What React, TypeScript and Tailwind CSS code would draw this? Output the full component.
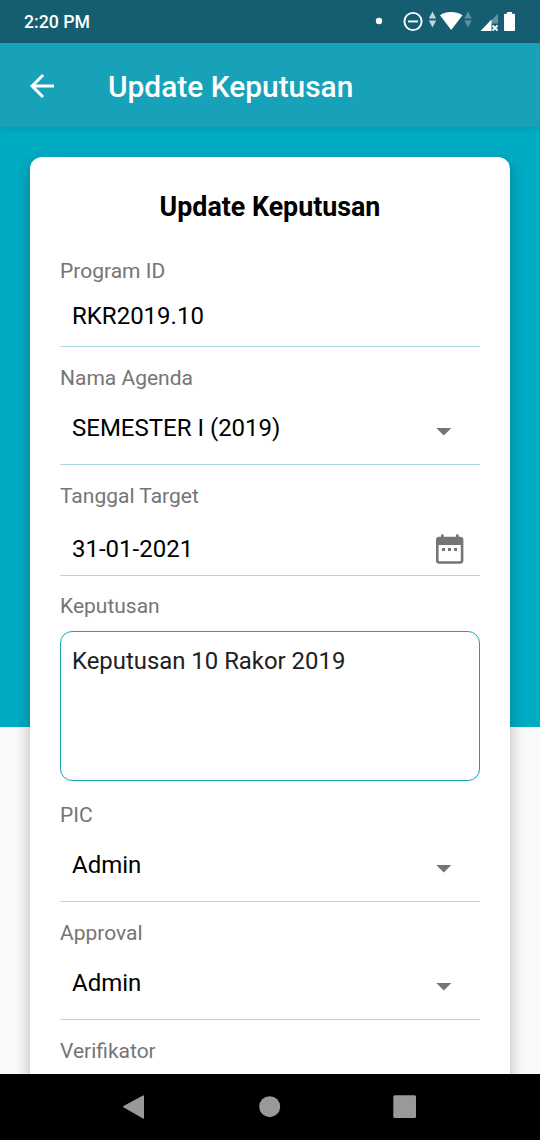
import type { ReactNode } from "react";

function StatusBar() {
  return (
    <div className="flex h-[43px] shrink-0 items-center bg-[#155e72] pr-6 pl-6 text-white">
      <span className="pt-px text-[17.7px] leading-6 font-medium">2:20 PM</span>
      <svg className="ml-auto h-[43px] w-[150px] shrink-0" viewBox="366 0 150 43" fill="#fff">
        <circle cx="379" cy="21" r="3.2" />
        <circle cx="413" cy="21.5" r="8.6" fill="none" stroke="#fff" strokeWidth="1.9" />
        <rect x="408" y="20.5" width="10" height="1.9" />
        <path d="M432.500 11.500l3.700 7h-7.400zM432.500 27.500l3.700-7h-7.400z" fill="#c3d5da" />
        <path d="M440 15.200C446 10.800 456 10.800 462.500 15.200L451.200 30z" />
        <path d="M468 11.500l3.700 7h-7.400zM468 27.500l3.700-7h-7.400z" fill="#5f91a0" />
        <path d="M491 20.700L498 13.500V23.500H491z" fill="#5f91a0" />
        <path d="M480.500 31L491.500 19.500V31z" />
        <path d="M492.500 25.500l5 5m0-5l-5 5" stroke="#fff" strokeWidth="1.900" />
        <path d="M507 12h5v1.700h2a1 1 0 0 1 1 1V30a1 1 0 0 1-1 1h-9a1 1 0 0 1-1-1V14.700a1 1 0 0 1 1-1h2z" />
      </svg>
    </div>
  );
}

function AppBar() {
  return (
    <header className="relative flex h-[84px] shrink-0 items-center bg-[#17a2ba] pl-6 text-white shadow-[0_1px_8px_rgba(0,0,0,0.12)]">
      <svg className="mt-px h-9 w-9" viewBox="0 0 24 24" fill="currentColor">
        <path d="M20 11H7.830l5.590-5.590L12 4l-8 8 8 8 1.410-1.410L7.830 13H20v-2z" />
      </svg>
      <h1 className="ml-12 pt-1 text-[29.9px] leading-9 font-medium">Update Keputusan</h1>
    </header>
  );
}

function Label({ children }: { children: ReactNode }) {
  return (
    <div className="h-[45px] pt-[17px] text-[21px] leading-7 text-[#757575]">{children}</div>
  );
}

function Caret() {
  return (
    <svg className="mt-[8px] mr-[28px] ml-auto h-2 w-4" viewBox="0 0 16 8" fill="#757575">
      <path d="M0.300 0h15L7.800 7.500z" />
    </svg>
  );
}

function SelectField({ label, value }: { label: string; value: string }) {
  return (
    <div>
      <Label>{label}</Label>
      <div className="flex h-[73px] items-center border-b border-[#add8e6] pl-3 text-[24px] text-black">
        <span>{value}</span>
        <Caret />
      </div>
    </div>
  );
}

function NavBar() {
  return (
    <nav className="relative flex h-[66px] shrink-0 items-center justify-center bg-black">
      <svg className="h-[66px] w-[540px]" viewBox="0 0 540 66" fill="#999">
        <path
          d="M123.800 32.700L143.300 22V44z"
          stroke="#999"
          strokeWidth="1.400"
          strokeLinejoin="round"
        />
        <circle cx="269.700" cy="32.700" r="10.500" />
        <rect x="393.300" y="21.300" width="22.700" height="22.700" rx="1.500" />
      </svg>
    </nav>
  );
}

export default function App() {
  return (
    <div className="flex h-[1140px] w-[540px] flex-col overflow-hidden font-['Roboto',sans-serif]">
      <StatusBar />
      <AppBar />
      <main className="min-h-0 flex-1 overflow-hidden bg-[linear-gradient(#00acc4_600px,#fafafa_600px)] px-[30px] pt-[30px]">
        <section className="h-[1100px] rounded-t-[12px] bg-white px-[30px] shadow-[0_6px_16px_rgba(0,0,0,0.28)]">
          <h2 className="h-[83px] pt-[34px] text-center text-[26.8px] leading-8 font-bold text-black">
            Update Keputusan
          </h2>
          <div>
            <Label>Program ID</Label>
            <div className="flex h-[62px] items-center border-b border-[#add8e6] pl-3 text-[24px] text-black">
              RKR2019.10
            </div>
          </div>
          <SelectField label="Nama Agenda" value="SEMESTER I (2019)" />
          <div>
            <Label>Tanggal Target</Label>
            <div className="flex h-[66px] items-center border-b border-[#add8e6] pt-3 pl-3 text-[24px] text-black">
              <span>31-01-2021</span>
              <svg className="mr-[16px] ml-auto h-[30px] w-[28px]" viewBox="0 0 28 30">
                <rect x="1.300" y="4" width="24.800" height="24.500" rx="2" fill="none" stroke="#757575" strokeWidth="2.600" />
                <path d="M1 4h25.500v7H1zM5 0.500h2.700V4H5zM20 0.500h2.700V4H20z" fill="#757575" />
                <path d="M6 14h3v3H6zM12 14h3v3h-3zM18 14h3v3h-3z" fill="#757575" />
              </svg>
            </div>
          </div>
          <div className="-mt-px pb-[3px]">
            <Label>Keputusan</Label>
            <div className="mt-[11px] h-[150px] rounded-[12px] border border-[#17a2b8] px-[11px] pt-[13px] text-[23.9px] leading-8 text-[#212121]">
              Keputusan 10 Rakor 2019
            </div>
          </div>
          <SelectField label="PIC" value="Admin" />
          <SelectField label="Approval" value="Admin" />
          <Label>Verifikator</Label>
        </section>
      </main>
      <NavBar />
    </div>
  );
}
